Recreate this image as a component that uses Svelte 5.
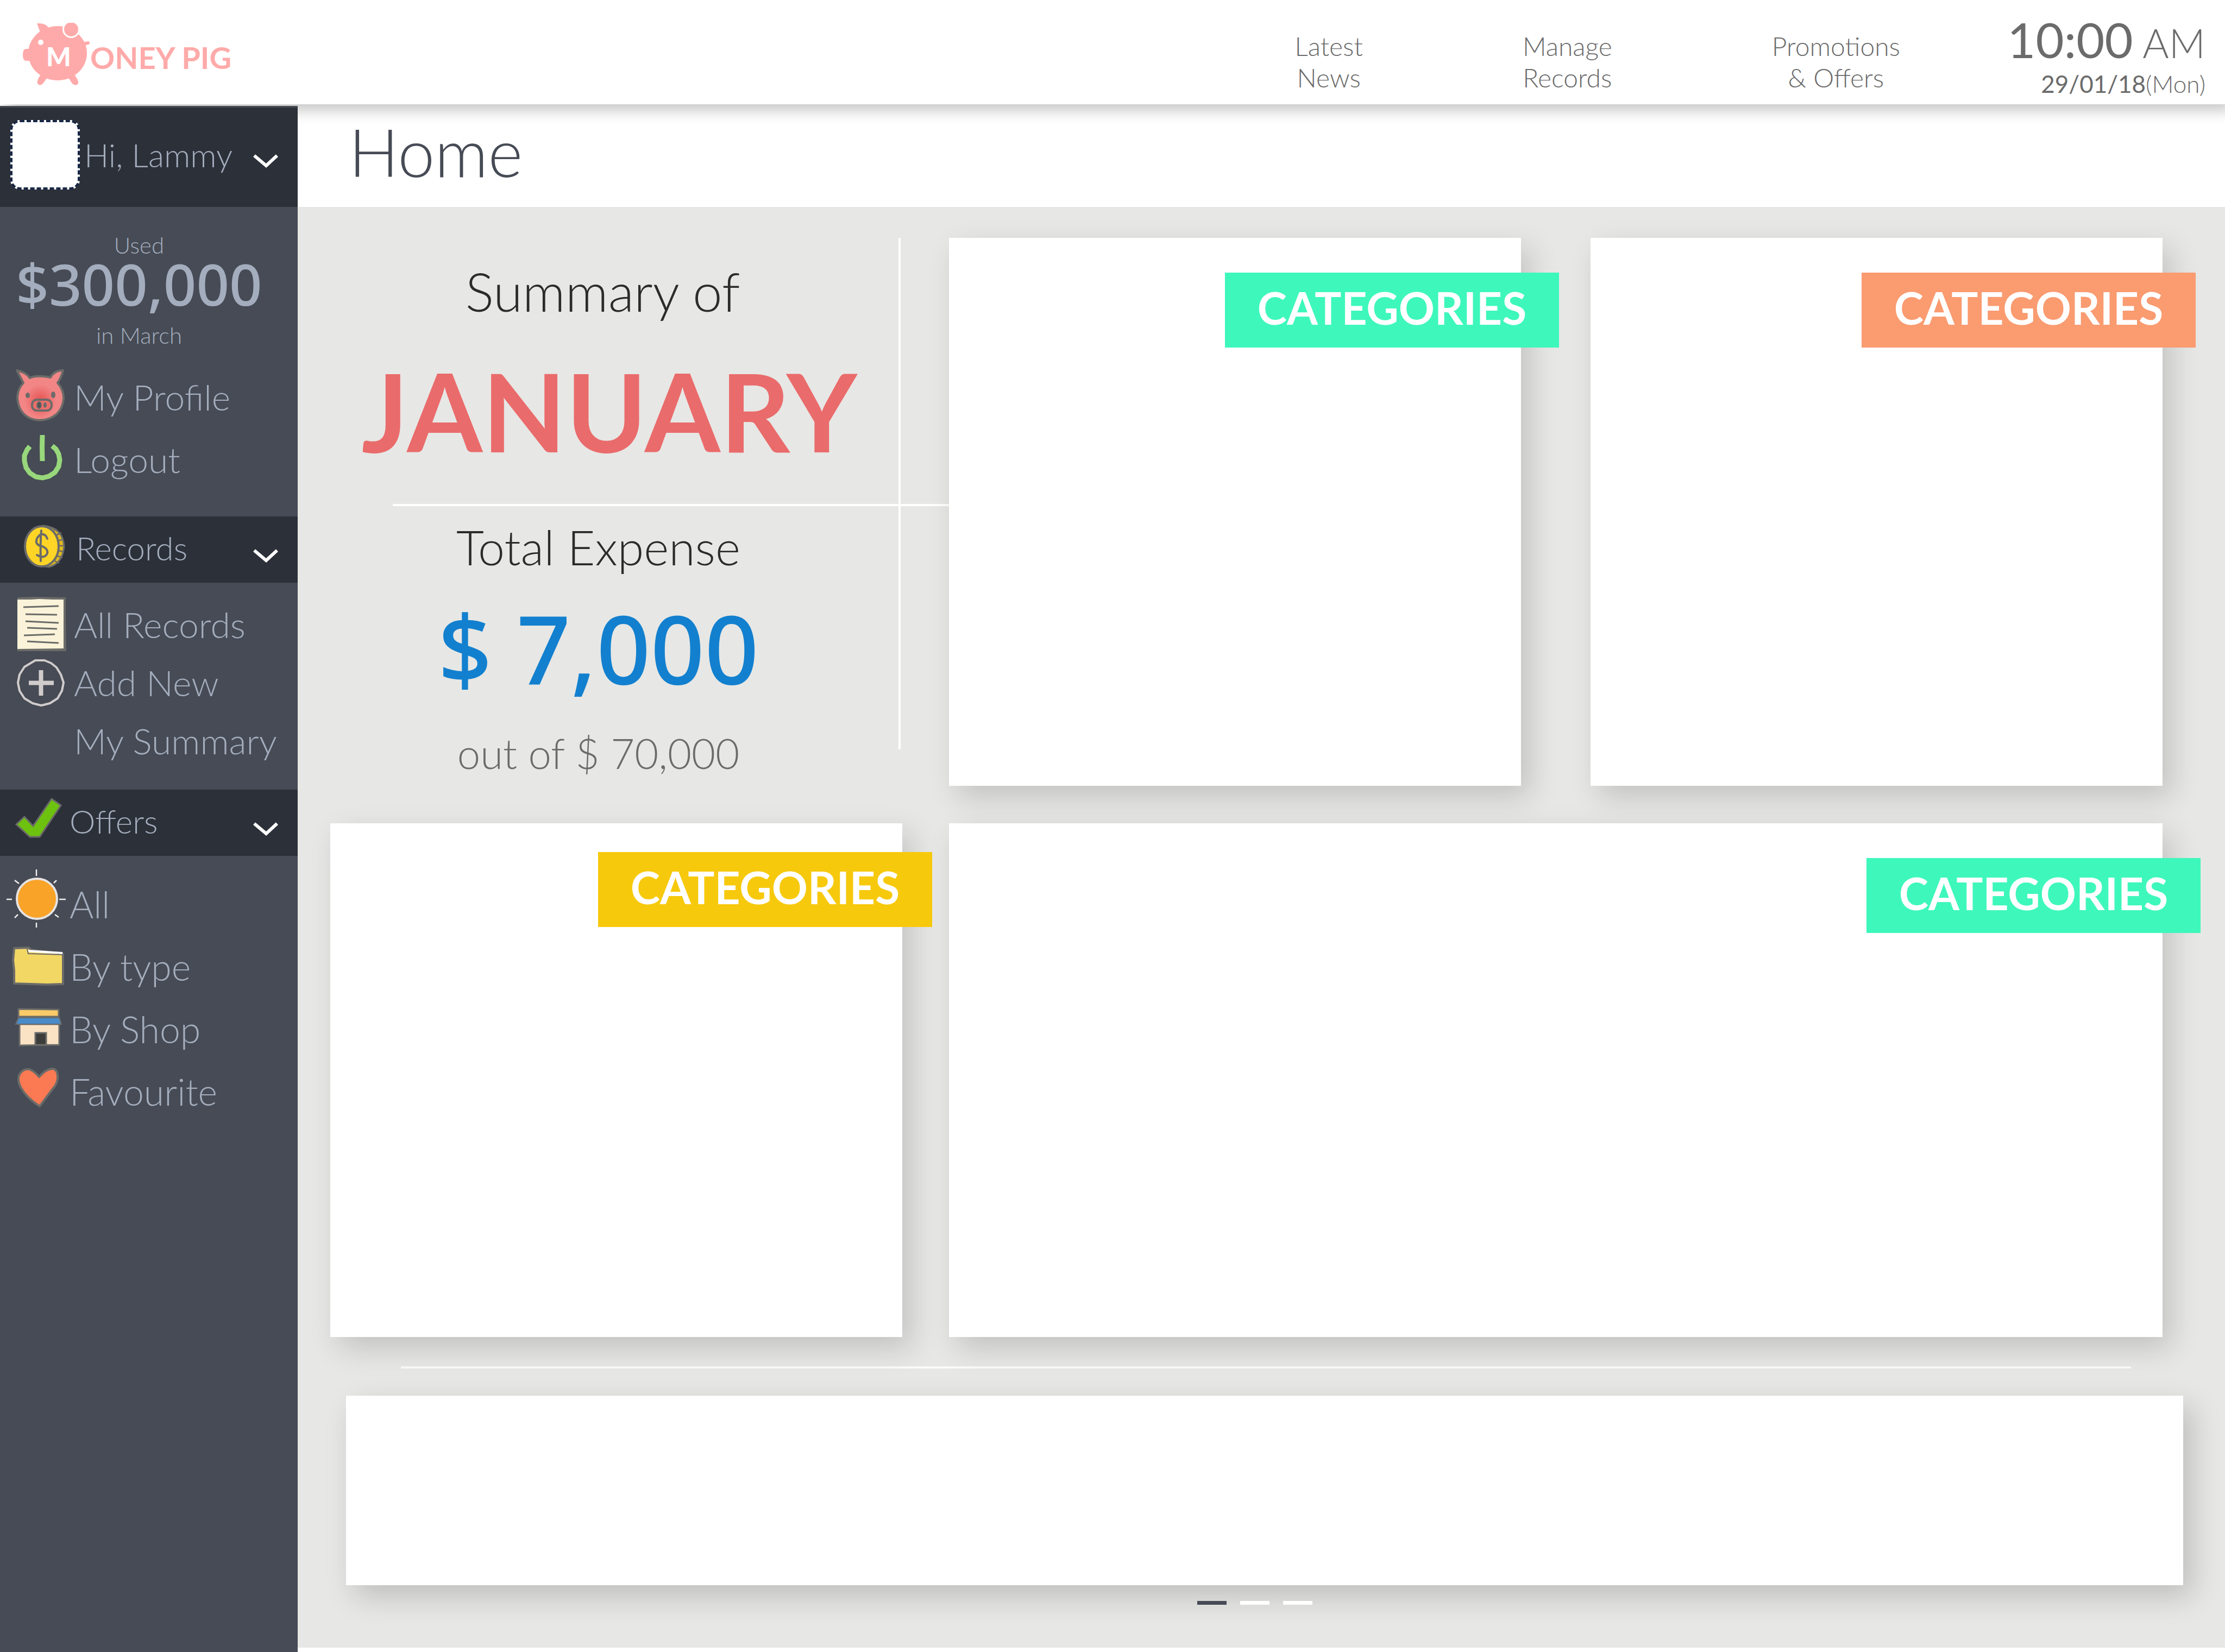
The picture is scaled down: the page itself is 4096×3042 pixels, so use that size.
<script>
  const topLinks = [
    ['Latest', 'News'],
    ['Manage', 'Records'],
    ['Promotions', '& Offers']
  ];
  const accountLinks = [
    { icon: 'pig', label: 'My Profile' },
    { icon: 'power', label: 'Logout' }
  ];
  const recordLinks = [
    { icon: 'paper', label: 'All Records' },
    { icon: 'plus', label: 'Add New' },
    { icon: 'none', label: 'My Summary' }
  ];
  const offerLinks = [
    { icon: 'sun', label: 'All' },
    { icon: 'folder', label: 'By type' },
    { icon: 'shop', label: 'By Shop' },
    { icon: 'heart', label: 'Favourite' }
  ];
  let slide = $state(0);
</script>

{#snippet chevron()}
  <svg class="chevron" viewBox="0 0 46 25" aria-hidden="true">
    <path d="M2 2.5 L24 21 L44 2.5" fill="none" stroke="#fff" stroke-width="6" />
  </svg>
{/snippet}

{#snippet icon(name)}
  <svg class="icon" viewBox="0 0 110 110" aria-hidden="true">
    {#if name === 'pig'}
      <defs>
        <radialGradient id="blush" cx="0.5" cy="0.62" r="0.34">
          <stop offset="0" stop-color="#e65050" />
          <stop offset="1" stop-color="#f28686" />
        </radialGradient>
      </defs>
      <path d="M19 9 Q35 12 43 23 Q55 17 81 22 Q88 9 104 9 Q101 22 94 32 Q106 46 105 62 Q102 88 80 97 Q60 105 41 96 Q21 85 20 58 Q21 43 31 32 Z" fill="url(#blush)" stroke="#6b6b69" stroke-width="4" stroke-linejoin="round" />
      <rect x="47" y="63" width="36" height="20" rx="9" fill="#ec6f6c" stroke="#6b6b69" stroke-width="4" />
      <ellipse cx="60" cy="73" rx="4" ry="6" fill="#555" stroke="#6b6b69" stroke-width="2" />
      <ellipse cx="71" cy="73" rx="3" ry="5" fill="#6b6b69" />
      <ellipse cx="39" cy="55" rx="4" ry="5" fill="#6b6b69" />
      <ellipse cx="86" cy="54" rx="4" ry="6" fill="#6b6b69" />
    {:else if name === 'power'}
      <path d="M43 34 L38 40 L33 51 L33 61 L36 73 L43 83 L54 90 L66 92 L78 89 L89 82 L96 71 L98 59 L96 48 L91 39 L84 33" fill="none" stroke="#98d77b" stroke-width="9" />
      <path d="M66 13 L65.500 36 L66 61" fill="none" stroke="#98d77b" stroke-width="9" />
    {:else if name === 'coin'}
      <path d="M68 16 Q104 20 106 54 Q103 86 78 92 L62 90 Z" fill="#dfb91e" stroke="#6b6b69" stroke-width="3" />
      <path d="M84 26 l8 -4 M90 34 l11 -5 M94 44 l11 -3 M95 53 h11 M95 62 l11 2 M92 71 l11 4 M87 80 l10 5" stroke="#6b6b69" stroke-width="2.500" />
      <ellipse cx="65" cy="54" rx="31" ry="37" fill="#fed426" stroke="#6b6b69" stroke-width="4" />
      <path d="M75 40 Q72 30 63 32 Q54 38 55 47 Q57 53 66 54 Q77 59 75 67 Q70 78 56 70 M64 25 Q62 47 63 81" fill="none" stroke="#6b6b69" stroke-width="4" stroke-linecap="round" />
    {:else if name === 'paper'}
      <path d="M20 8 L50 7 L109 8 L109 51 L110 107 L20 107 Z" fill="#6b6b69" />
      <path d="M20 12 L45 12 L60 11 L85 12 L105 12 L105 102 L20 103 Z" fill="#faf3d9" />
      <path d="M31 26 L96 24 M35 39 L93 40 M35 52 L96 55 M38 64 L93 66 M32 78 L89 76 M38 89 L96 92" fill="none" stroke="#6b6b69" stroke-width="3" />
    {:else if name === 'plus'}
      <path d="M53 17 L70 17 L82 22 L92 30 L100 43 L105 58 L102 73 L94 87 L80 96 L64 100 L48 96 L33 87 L24 73 L21 58 L24 43 L33 29 Z" fill="none" stroke="#d1cccc" stroke-width="4" stroke-linejoin="round" />
      <path d="M63.500 35 V82 M41 58.500 H87" stroke="#d1cccc" stroke-width="8" />
    {:else if name === 'check'}
      <path d="M18 63 L33 49 L49 66 L83 16 L100 28 L61 86 L43 86 Z" fill="#6dc210" stroke="#6b6b69" stroke-width="3" />
    {:else if name === 'sun'}
      <ellipse cx="56" cy="48" rx="37" ry="37" fill="#f9a329" stroke="#e6e3e3" stroke-width="4" />
      <path d="M55 -6 V6 M55 92 V101 M0 49 H10 M97 49 H109 M15 14 L23 20 M92 14 L87 19 M15 83 L21 77 M89 77 L96 82" stroke="#eee" stroke-width="2.500" />
    {:else if name === 'folder'}
      <path d="M14 24 L41 23 L45 27 L104 34 L104 90 L75 91 L14 89 L14 65 L12 46 Z" fill="#f2d765" stroke="#6b6b69" stroke-width="4" stroke-linejoin="round" />
      <path d="M40 29 L103 33" stroke="#fff" stroke-width="4" />
      <path d="M38 25 L40 34 L106 36" fill="none" stroke="#6b6b69" stroke-width="2" />
    {:else if name === 'shop'}
      <path d="M22 21 L96 22 V35 H22 Z" fill="#facb68" stroke="#6b6b69" stroke-width="3" />
      <path d="M24 49 L97 49 V87 L24 88 Z" fill="#fae3c4" stroke="#6b6b69" stroke-width="3" />
      <path d="M22 37 L97 37 L101 49 L17 49 Z" fill="#498bc9" stroke="#6b6b69" stroke-width="2" />
      <rect x="53" y="65" width="20" height="22" fill="#3c3c3b" stroke="#6b6b69" stroke-width="3" />
    {:else if name === 'heart'}
      <path d="M60 31 Q74 15 86 16 Q95 18 94 35 Q92 46 85 53 L61 85 Q37 70 26 50 Q19 36 24 26 Q31 15 42 17 Q52 21 60 31 Z" fill="#fb7a53" stroke="#6b6b69" stroke-width="4" stroke-linejoin="round" />
    {/if}
  </svg>
{/snippet}

{#snippet links(items)}
  {#each items as item}
    <li>
      <a href="#{item.icon}">{@render icon(item.icon)}<span>{item.label}</span></a>
    </li>
  {/each}
{/snippet}

<div class="page">
  <header class="topbar">
    <a class="logo" href="#home" aria-label="Money Pig">
      <svg class="mascot" viewBox="0 0 124 116" aria-hidden="true">
        <g fill="#ffaaaa">
          <ellipse cx="64" cy="56" rx="54" ry="50" />
          <path d="M26 1 Q45 0 48 12 L33 20 Z" />
          <path d="M12 48 H6 Q0 48 0 59 Q0 70 6 70 H14 Z" />
          <path d="M34 94 Q25 106 27 111 Q30 118 37 112 L47 98 Z" />
          <path d="M94 94 Q103 106 102 111 Q99 118 91 112 L82 98 Z" />
          <path d="M108 40 L120 37" stroke="#ffaaaa" stroke-width="6" stroke-linecap="round" />
          <circle cx="89" cy="12" r="14.500" stroke="#fff" stroke-width="3" />
        </g>
        <ellipse cx="33" cy="36" rx="5" ry="5" fill="#fff" />
      </svg>
      <span class="logo-m">M</span>
      <span class="logo-text">ONEY PIG</span>
    </a>
    <nav class="topnav">
      {#each topLinks as [first, second]}
        <a href="#{second}">{first}<br />{second}</a>
      {/each}
    </nav>
    <div class="clock">
      <div class="time"><strong>10:00</strong> AM</div>
      <div class="date"><strong>29/01/18</strong>(Mon)</div>
    </div>
  </header>

  <div class="body">
    <aside class="sidebar">
      <button class="bar user">
        <span class="avatar"></span>
        <span class="label">Hi, Lammy</span>
        {@render chevron()}
      </button>
      <section class="account">
        <p class="note">Used</p>
        <p class="amount">$300,000</p>
        <p class="note">in March</p>
        <ul>{@render links(accountLinks)}</ul>
      </section>
      <button class="bar">
        {@render icon('coin')}
        <span class="label">Records</span>
        {@render chevron()}
      </button>
      <ul class="records">{@render links(recordLinks)}</ul>
      <button class="bar offers-bar">
        {@render icon('check')}
        <span class="label">Offers</span>
        {@render chevron()}
      </button>
      <ul class="offers">{@render links(offerLinks)}</ul>
    </aside>

    <main>
      <h1>Home</h1>
      <div class="content">
        <div class="grid">
          <section class="summary">
            <h2>Summary of</h2>
            <p class="month">JANUARY</p>
            <hr />
            <h3>Total Expense</h3>
            <p class="total">$ 7,000</p>
            <p class="limit">out of $ 70,000</p>
          </section>
          <article class="card second"><h2 class="badge mint">CATEGORIES</h2></article>
          <article class="card third"><h2 class="badge coral">CATEGORIES</h2></article>
          <article class="card first"><h2 class="badge gold">CATEGORIES</h2></article>
          <article class="card wide"><h2 class="badge mint">CATEGORIES</h2></article>
        </div>
        <hr class="divider" />
        <section class="carousel" aria-label="Highlights"></section>
        <div class="dots">
          {#each [0, 1, 2] as n}
            <button class:active={slide === n} aria-label="Slide {n + 1}" onclick={() => (slide = n)}></button>
          {/each}
        </div>
      </div>
    </main>
  </div>
</div>

<style>
  :global(body) {
    background: #fff;
  }
  * {
    box-sizing: border-box;
    margin: 0;
    padding: 0;
  }
  .page {
    display: flex;
    flex-direction: column;
    min-height: 100vh;
    overflow: hidden;
    font-family: Lato, "Liberation Sans", sans-serif;
    font-weight: 300;
    color: #2b2b2b;
  }
  a {
    color: inherit;
    text-decoration: none;
  }
  ul {
    list-style: none;
  }
  button {
    border: 0;
    font: inherit;
    color: inherit;
    cursor: pointer;
  }

  .topbar {
    position: relative;
    z-index: 1;
    display: flex;
    align-items: flex-start;
    height: 192px;
    padding: 0 36px 0 42px;
    background: #fff;
    box-shadow: 12px 12px 24px rgba(0, 0, 0, 0.22);
    color: #6b6b6b;
  }
  .logo {
    position: relative;
    display: flex;
    padding-top: 42px;
    color: #ffaaaa;
    font-weight: 700;
  }
  .mascot {
    width: 124px;
    height: 116px;
  }
  .logo-m {
    position: absolute;
    left: 43px;
    top: 76px;
    font-size: 48px;
    line-height: 56px;
    font-weight: 900;
    color: #fff;
  }
  .logo-text {
    padding-top: 36px;
    font-size: 56px;
    line-height: 56px;
  }
  .topnav {
    display: flex;
    gap: 294px;
    margin-left: auto;
    padding-top: 56px;
    font-size: 48px;
    line-height: 58px;
    text-align: center;
  }
  .clock {
    width: 562px;
    padding-top: 30px;
    text-align: right;
    white-space: nowrap;
  }
  .clock strong {
    font-weight: 400;
  }
  .time {
    font-size: 74px;
    line-height: 84px;
  }
  .time strong {
    font-size: 90px;
  }
  .date {
    font-size: 44px;
    line-height: 66px;
  }

  .body {
    flex: 1;
    display: flex;
  }
  .sidebar {
    position: relative;
    z-index: 2;
    flex: 0 0 548px;
    margin-top: 3px;
    border-top: 3px solid #464b55;
    background: #464b55;
    color: #a4adbd;
  }
  .bar {
    display: flex;
    align-items: center;
    width: 100%;
    height: 122px;
    padding: 0 36px 10px 12px;
    background: #2c3039;
    text-align: left;
    font-size: 60px;
  }
  .bar .label {
    margin-top: 4px;
    margin-left: 18px;
  }
  .offers-bar .label {
    margin-left: 6px;
  }
  .chevron {
    width: 46px;
    height: 25px;
    margin-left: auto;
    margin-top: 32px;
  }
  .user {
    height: 183px;
    padding-left: 19px;
  }
  .user .label {
    margin-top: 0;
    margin-left: 8px;
  }
  .user .chevron {
    margin-top: 24px;
  }
  .avatar {
    width: 128px;
    height: 128px;
    border: 4px dashed #182845;
    border-radius: 18px;
    background: #fff;
  }
  .account {
    padding: 44px 0 51px;
  }
  .note {
    width: 512px;
    font-size: 42px;
    line-height: 52px;
    text-align: center;
  }
  .amount {
    width: 512px;
    margin: -4px 0 20px;
    font-family: "Noto Sans", sans-serif;
    font-size: 106px;
    font-weight: 500;
    line-height: 98px;
    text-align: center;
  }
  .account ul {
    padding-top: 27px;
  }
  .icon {
    flex: none;
    width: 110px;
    height: 110px;
    overflow: visible;
  }
  li a {
    display: flex;
    align-items: center;
    height: 115px;
    padding-left: 12px;
    font-size: 66px;
  }
  li span {
    margin-top: 6px;
    margin-left: 14px;
  }
  .records {
    padding: 20px 0 40px;
  }
  .records a {
    height: 107px;
  }
  .offers {
    padding-top: 28px;
  }
  .offers a {
    font-size: 68px;
  }
  .offers span {
    margin-left: 6px;
  }

  main {
    flex: 1;
    display: flex;
    flex-direction: column;
  }
  h1 {
    height: 189px;
    padding-left: 94px;
    font-size: 122px;
    font-weight: 300;
    line-height: 174px;
    color: #464b55;
  }
  .content {
    flex: 1;
    margin-bottom: 8px;
    padding: 57px 77px 0 60px;
    background: #e7e7e5;
  }
  .grid {
    display: grid;
    grid-template-columns: 1fr 86px 1fr 128px 1fr;
    grid-template-rows: minmax(1009px, auto) minmax(946px, auto);
    row-gap: 69px;
    margin-right: 38px;
  }
  .card {
    position: relative;
    background: #fff;
    box-shadow: 16px 20px 50px rgba(0, 0, 0, 0.16);
  }
  .second {
    grid-column: 3;
  }
  .third {
    grid-column: 5;
  }
  .first {
    grid-column: 1;
  }
  .wide {
    grid-column: 3 / 6;
  }
  .badge {
    position: absolute;
    top: 64px;
    right: -70px;
    width: 615px;
    height: 138px;
    font-size: 82px;
    font-weight: 700;
    line-height: 128px;
    text-align: center;
    color: #fff;
  }
  .third .badge {
    right: -61px;
  }
  .first .badge {
    top: 53px;
    right: -55px;
  }
  .mint {
    background: #3ef7bb;
  }
  .coral {
    background: #fa9b70;
  }
  .gold {
    background: #f7c90c;
  }

  .summary {
    position: relative;
    grid-column: 1;
    padding: 38px 50px 0 0;
    text-align: center;
  }
  .summary::after {
    content: "";
    position: absolute;
    top: 0;
    right: 3px;
    bottom: 67px;
    width: 4px;
    background: #fff;
  }
  .summary h2 {
    font-size: 98px;
    font-weight: 300;
    line-height: 120px;
  }
  .month {
    margin: 60px 0 72px;
    padding-left: 24px;
    font-size: 200px;
    font-weight: 700;
    line-height: 200px;
    color: #ea6b6b;
  }
  .summary hr {
    height: 4px;
    margin: 0 -136px 0 115px;
    border: 0;
    background: #fff;
  }
  .summary h3 {
    margin-top: 21px;
    padding-right: 16px;
    font-size: 88px;
    font-weight: 300;
    line-height: 108px;
  }
  .total {
    margin: 42px 0 59px;
    padding-right: 16px;
    font-family: "Noto Sans", sans-serif;
    font-size: 174px;
    font-weight: 500;
    line-height: 180px;
    color: #1280cf;
  }
  .limit {
    padding-right: 16px;
    font-size: 76px;
    line-height: 90px;
    color: #6b6b6b;
  }

  .divider {
    height: 4px;
    margin: 54px 96px 50px 130px;
    border: 0;
    background: #fafafa;
  }
  .carousel {
    min-height: 349px;
    margin-left: 29px;
    background: #fff;
    box-shadow: 16px 20px 50px rgba(0, 0, 0, 0.18);
  }
  .dots {
    position: relative;
    display: flex;
    justify-content: center;
    gap: 25px;
    padding: 29px 8px 0 0;
  }
  .dots button {
    width: 54px;
    height: 7px;
    background: #fff;
  }
  .dots .active {
    background: #464b55;
  }
</style>
